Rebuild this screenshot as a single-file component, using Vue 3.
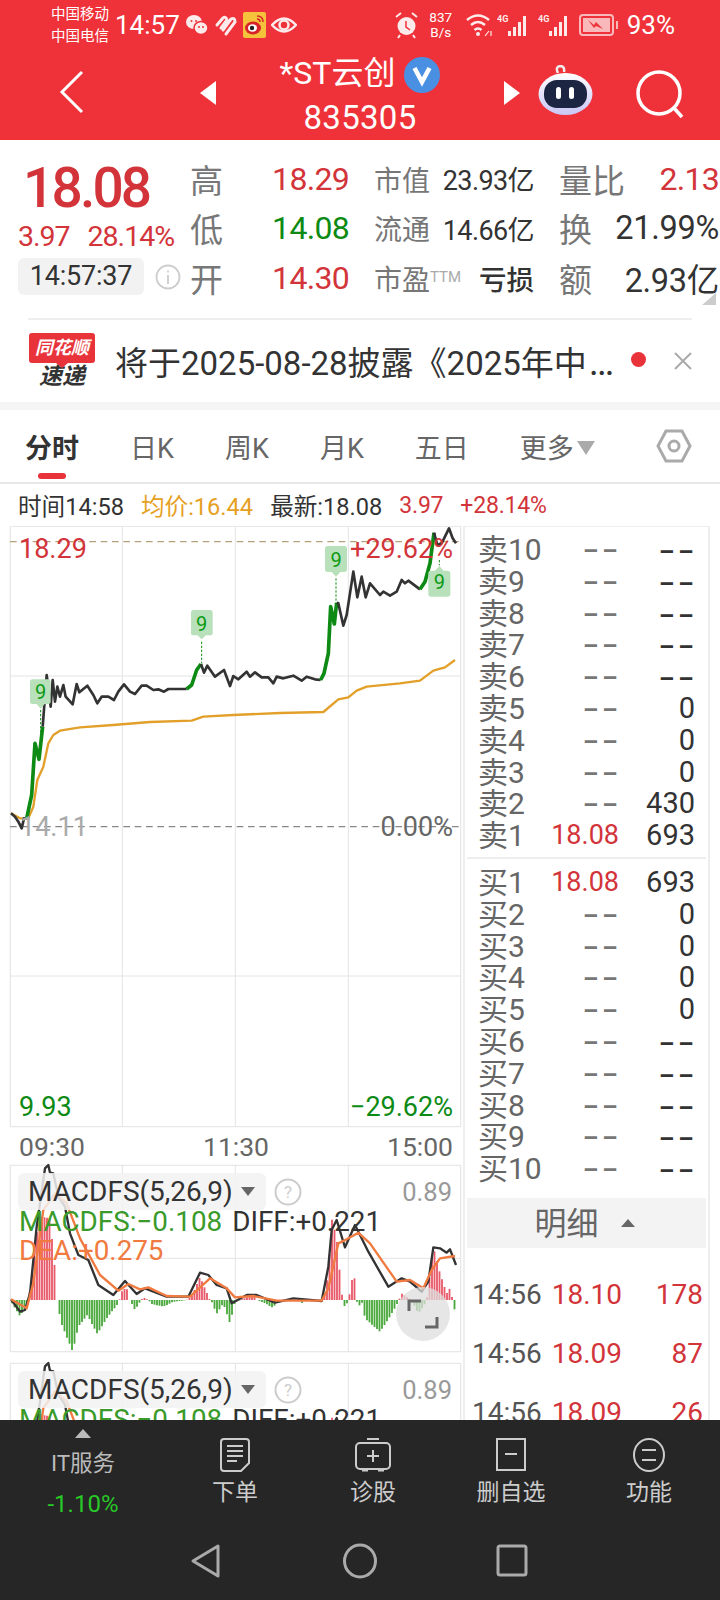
<template>
  <div class="page">
    <!-- 红色顶部 -->
    <header class="top">
      <div class="status">
        <div class="carrier"><span>中国移动</span><span>中国电信</span></div>
        <span class="clock">14:57</span>
        <svg class="st-ic" width="24" height="24" viewBox="0 0 24 24" fill="#fff" opacity=".9">
          <ellipse cx="9" cy="9" rx="8" ry="7" />
          <ellipse cx="16" cy="15" rx="7" ry="6.5" stroke="#ef3239" stroke-width="1.5" />
          <circle cx="6.5" cy="8" r="1" fill="#ef3239" /><circle cx="11" cy="8" r="1" fill="#ef3239" />
          <circle cx="14" cy="14" r="1" fill="#ef3239" /><circle cx="18" cy="14" r="1" fill="#ef3239" />
        </svg>
        <svg class="st-ic" width="24" height="24" viewBox="0 0 24 24" fill="none" stroke="#fff" stroke-width="3" stroke-linecap="round" opacity=".9">
          <path d="M3 12 L9 5 Q12 3 13 7 L7 15 M9 17 L17 6 Q21 4 21 9 L12 21" />
        </svg>
        <svg class="st-ic" width="23" height="26" viewBox="0 0 23 26">
          <rect width="23" height="26" rx="2" fill="#f5c33b" />
          <ellipse cx="10" cy="16" rx="8" ry="6.5" fill="#d8232a" />
          <ellipse cx="9.5" cy="16" rx="4.5" ry="3.8" fill="#fff" />
          <circle cx="9" cy="16" r="2.2" fill="#222" />
          <path d="M14 4 Q20 4 20 10 M14 7 Q17 7 17 10" fill="none" stroke="#d8232a" stroke-width="1.5" />
        </svg>
        <svg class="st-ic" width="26" height="24" viewBox="0 0 26 24" fill="none" stroke="#fff" opacity=".9">
          <path d="M1 12 Q13 -1 25 12 Q13 25 1 12 Z" stroke-width="2.5" />
          <circle cx="13" cy="12" r="4.5" stroke-width="2.5" />
        </svg>
        <div class="st-right">
          <svg width="23" height="28" viewBox="0 0 23 28" fill="#fff" opacity=".9">
            <circle cx="11.5" cy="15" r="9" />
            <path d="M11 10 V16 L15 19" stroke="#ef3239" stroke-width="1.5" fill="none" />
            <path d="M1 6 L6 2 M22 6 L17 2 M5 24 L3 27 M18 24 L20 27" stroke="#fff" stroke-width="2" />
          </svg>
          <div class="speed"><span>837</span><span>B/s</span></div>
          <svg class="wifi" width="28" height="26" viewBox="0 0 28 26" fill="none" stroke="#fff" stroke-width="2.5" opacity=".9">
            <path d="M1 8 Q12 -1 23 8 M5 13 Q12 7 19 13 M8.5 18 Q12 15 15.5 18" />
            <circle cx="12" cy="22" r="2" fill="#fff" stroke="none" />
            <path d="M19 24 L23 19 M25 19 V24" stroke-width="1.2" />
          </svg>
          <svg v-for="n in 2" :key="n" width="34" height="24" viewBox="0 0 34 24" fill="#fff" opacity=".9">
            <text x="0" y="9" font-size="9" font-weight="700" font-family="Roboto, sans-serif">4G</text>
            <rect x="11" y="18" width="3" height="5" /><rect x="16" y="14" width="3" height="9" />
            <rect x="21" y="9" width="3" height="14" /><rect x="26" y="3" width="3" height="20" />
          </svg>
          <svg width="41" height="24" viewBox="0 0 41 24">
            <rect x="1" y="2" width="33" height="20" rx="3" fill="none" stroke="#f9b9ba" stroke-width="2" />
            <rect x="4" y="5" width="27" height="14" fill="#f9b9ba" />
            <path d="M9 7 L15 12 L17 9 L24 16 L17 13 L15 15 Z" fill="#ef3239" />
            <rect x="37" y="8" width="2" height="8" fill="#f9b9ba" />
          </svg>
          <span class="batt">93%</span>
        </div>
      </div>
      <nav class="nav">
        <svg class="back" width="28" height="44" viewBox="0 0 28 44" fill="none" stroke="#fff" stroke-width="3">
          <path d="M24 2 L4 22 L24 42" />
        </svg>
        <i class="tri-l"></i>
        <div class="title">
          <div class="name">
            <span>*ST云创</span>
            <svg width="36" height="36" viewBox="0 0 36 36">
              <circle cx="18" cy="18" r="18" fill="#4a90e2" />
              <path d="M10.5 11 L18 25 L25.5 11" fill="none" stroke="#fff" stroke-width="4.5" />
            </svg>
          </div>
          <div class="code">835305</div>
        </div>
        <i class="tri-r"></i>
        <svg class="robot" width="55" height="50" viewBox="0 0 55 50">
          <defs>
            <linearGradient id="head" x1="0" y1="0" x2="0" y2="1">
              <stop offset="0" stop-color="#fff" /><stop offset="1" stop-color="#c9c6f5" />
            </linearGradient>
          </defs>
          <path d="M20 8 Q17 2 22 1 Q27 1 26 7" fill="none" stroke="#eee" stroke-width="2.5" />
          <ellipse cx="27.5" cy="29" rx="27" ry="21" fill="url(#head)" />
          <rect x="6" y="15" width="43" height="28" rx="13" fill="#1c2542" />
          <rect x="18" y="22" width="5" height="12" rx="2.5" fill="#fff" />
          <rect x="31" y="22" width="5" height="12" rx="2.5" fill="#fff" />
        </svg>
        <svg class="search" width="50" height="50" viewBox="0 0 50 50" fill="none" stroke="#fff" stroke-width="3.5">
          <circle cx="24" cy="23" r="21" /><path d="M39 38 L47 47" />
        </svg>
      </nav>
    </header>

    <!-- 报价 -->
    <section class="quote">
      <div class="q-left">
        <div class="price">18.08</div>
        <div class="change"><span>3.97</span><span>28.14%</span></div>
        <div class="q-time">
          <span class="pill">14:57:37</span>
          <svg width="26" height="26" viewBox="0 0 26 26" fill="none" stroke="#ccc" stroke-width="1.8">
            <circle cx="13" cy="13" r="11.5" /><path d="M13 11 V20 M13 6.5 V8.5" />
          </svg>
        </div>
      </div>
      <div class="stats">
        <div v-for="c in stats" :key="c.label" class="stat">
          <span class="s-label" :class="c.cls">{{ c.label }}<sup v-if="c.ttm">TTM</sup></span>
          <span class="s-val" :class="[c.tone, { loss: c.ttm }]">{{ c.value }}</span>
        </div>
      </div>
      <i class="corner"></i>
    </section>

    <section class="news">
      <div class="logo">
        <span class="flag">同花顺</span>
        <span class="fast">速递</span>
      </div>
      <span class="news-text">将于2025-08-28披露《2025年中<span class="ell">…</span></span>
      <i class="dot"></i>
      <svg width="18" height="18" viewBox="0 0 18 18" stroke="#aaa" stroke-width="2">
        <path d="M1 1 L17 17 M17 1 L1 17" />
      </svg>
    </section>

    <!-- 周期 -->
    <div class="tabs">
      <span v-for="(t, i) in tabs" :key="t" class="tab" :class="{ on: i === 0 }">{{ t }}</span>
      <span class="tab more">更多<i></i></span>
      <svg class="hex" width="36" height="36" viewBox="0 0 36 36" fill="none" stroke="#aaa" stroke-width="3">
        <path d="M10 3 H26 L34 18 L26 33 H10 L2 18 Z" /><circle cx="18" cy="18" r="5" />
      </svg>
    </div>
    <div class="info">
      <span>时间14:58</span>
      <span class="gold">均价:16.44</span>
      <span>最新:18.08</span>
      <span class="red">3.97</span>
      <span class="red">+28.14%</span>
    </div>

    <div class="main">
      <div class="left">
        <!-- 分时 -->
        <div class="pane">
          <svg width="451" height="601" viewBox="30 18 1353 1803" fill="none" stroke-linejoin="round">
            <rect x="31" y="19" width="1351" height="1801" stroke="#e8e8e8" stroke-width="4" />
            <path d="M367 18 V1821 M706 18 V1821 M1045 18 V1821 M30 468 H1383 M30 1368 H1383" stroke="#e4e4e4" stroke-width="3" />
            <path d="M30 65 H1383" stroke="#b5a27c" stroke-width="3.5" stroke-dasharray="20 14" />
            <path d="M30 920 H1383" stroke="#888" stroke-width="3.5" stroke-dasharray="20 14" />
            <polyline :points="avgLine" stroke="#e2a02a" stroke-width="7" />
            <polyline v-for="(s, i) in priceLine" :key="i" :points="s.pts" :stroke="s.up ? '#0c8a14' : '#333'" :stroke-width="s.up ? 11 : 8" />
            <g v-for="b in badges" :key="b.x">
              <path :d="b.line" stroke="#0c8a14" stroke-width="3" stroke-dasharray="7 5" />
              <path :d="b.shape" fill="#b8e0bb" />
              <text :x="b.x" :y="b.ty" text-anchor="middle" font-size="60" fill="#0c9a14" font-family="Roboto, sans-serif">9</text>
            </g>
          </svg>
          <span class="lb red" style="left: 9px; top: 8px">18.29</span>
          <span class="lb red rt" style="top: 8px">+29.62%</span>
          <span class="lb muted" style="left: 10px; top: 286px">14.11</span>
          <span class="lb grey rt" style="top: 286px">0.00%</span>
          <span class="lb green" style="left: 9px; top: 566px">9.93</span>
          <span class="lb green rt" style="top: 566px">−29.62%</span>
        </div>
        <div class="axis"><span>09:30</span><span>11:30</span><span>15:00</span></div>

        <!-- 副图 -->
        <div v-for="n in 2" :key="n" class="sub" :class="{ second: n === 2 }">
          <svg width="451" height="187" viewBox="30 15 1353 561" fill="none" stroke-linejoin="round">
            <rect x="31" y="16" width="1351" height="559" stroke="#e8e8e8" stroke-width="4" />
            <path d="M367 15 V576 M706 15 V576 M1045 15 V576 M30 295 H1383" stroke="#e4e4e4" stroke-width="3" />
            <path v-for="b in bars" :key="b.x" :d="`M${b.x} 420 V${b.y}`" :stroke="b.y < 420 ? '#e8596a' : '#4aa83c'" stroke-width="5.5" />
            <polyline :points="diffLine" stroke="#333" stroke-width="7" />
            <polyline :points="deaLine" stroke="#f07a40" stroke-width="7" />
          </svg>
          <div class="sub-head">
            <span class="select">MACDFS(5,26,9)<i></i></span>
            <svg width="28" height="28" viewBox="0 0 28 28" fill="none" stroke="#ccc" stroke-width="2">
              <circle cx="14" cy="14" r="12.5" />
              <text x="14" y="20" text-anchor="middle" font-size="17" fill="#ccc" stroke="none" font-family="Roboto, sans-serif">?</text>
            </svg>
            <span class="range">0.89</span>
          </div>
          <div class="legend"><span class="l-green">MACDFS:−0.108</span><span>DIFF:+0.221</span></div>
          <div class="legend dea">DEA:+0.275</div>
          <div v-if="n === 1" class="expand">
            <svg width="30" height="30" viewBox="0 0 30 30" fill="none" stroke="#666" stroke-width="3">
              <path d="M1 12 V2 H13 M29 18 V28 H17" />
            </svg>
          </div>
        </div>
      </div>

      <!-- 盘口 -->
      <aside class="book">
        <div class="asks">
          <div v-for="r in asks" :key="r.label" class="lvl">
            <span class="l-name">{{ r.label }}</span>
            <span class="l-price"><b v-if="r.price" class="red">{{ r.price }}</b><em v-else>--</em></span>
            <span class="l-vol"><template v-if="r.vol">{{ r.vol }}</template><em v-else>--</em></span>
          </div>
        </div>
        <div class="bids">
          <div v-for="r in bids" :key="r.label" class="lvl">
            <span class="l-name">{{ r.label }}</span>
            <span class="l-price"><b v-if="r.price" class="red">{{ r.price }}</b><em v-else>--</em></span>
            <span class="l-vol"><template v-if="r.vol">{{ r.vol }}</template><em v-else>--</em></span>
          </div>
        </div>
        <div class="detail-head">明细<i></i></div>
        <div v-for="(d, i) in details" :key="i" class="tick">
          <span>14:56</span><span class="red">{{ d[0] }}</span><span class="red">{{ d[1] }}</span>
        </div>
      </aside>
    </div>

    <!-- 底栏 -->
    <footer class="bottom">
      <div class="actions">
        <div class="act sector">
          <i class="up"></i>
          <span class="sec-name">IT服务</span>
          <span class="sec-pct">-1.10%</span>
        </div>
        <div class="act">
          <svg width="32" height="36" viewBox="0 0 32 36" fill="none" stroke="#ccc" stroke-width="2">
            <path d="M5 2 H27 Q30 2 30 5 V26 L22 34 H5 Q2 34 2 31 V5 Q2 2 5 2 Z M8 9 H24 M8 14 H24 M8 19 H24 M8 24 H18" />
          </svg>
          <span>下单</span>
        </div>
        <div class="act">
          <svg width="38" height="36" viewBox="0 0 38 36" fill="none" stroke="#ccc" stroke-width="2">
            <rect x="2" y="6" width="34" height="26" rx="4" /><path d="M13 2 H25 M19 13 V25 M13 19 H25" />
            <path d="M8 33 H14 M24 33 H30" stroke-width="3" />
          </svg>
          <span>诊股</span>
        </div>
        <div class="act">
          <svg width="32" height="36" viewBox="0 0 32 36" fill="none" stroke="#ccc" stroke-width="2">
            <rect x="2" y="2" width="28" height="31" /><path d="M10 17 H22" />
          </svg>
          <span>删自选</span>
        </div>
        <div class="act">
          <svg width="34" height="36" viewBox="0 0 34 36" fill="none" stroke="#ccc" stroke-width="2">
            <ellipse cx="17" cy="18" rx="15" ry="16" /><path d="M10 13 H24 M10 23 H24" />
          </svg>
          <span>功能</span>
        </div>
      </div>
      <div class="sys">
        <svg width="34" height="36" viewBox="0 0 34 36" fill="none" stroke="#aaa" stroke-width="3" stroke-linejoin="round">
          <path d="M29 3 V33 L4 18 Z" />
        </svg>
        <svg class="home" width="34" height="36" viewBox="0 0 34 36" fill="none" stroke="#aaa" stroke-width="3">
          <ellipse cx="17" cy="18" rx="15.5" ry="16" />
        </svg>
        <svg width="34" height="36" viewBox="0 0 34 36" fill="none" stroke="#aaa" stroke-width="3" stroke-linejoin="round">
          <rect x="3" y="3" width="28" height="29" rx="2" />
        </svg>
      </div>
    </footer>
  </div>
</template>

<script setup>
const stats = [
  { label: '高', value: '18.29', tone: 'red', cls: 'big' },
  { label: '市值', value: '23.93亿' },
  { label: '量比', value: '2.13', tone: 'red', cls: 'big' },
  { label: '低', value: '14.08', tone: 'green', cls: 'big' },
  { label: '流通', value: '14.66亿' },
  { label: '换', value: '21.99%', tone: 'wide', cls: 'big' },
  { label: '开', value: '14.30', tone: 'red', cls: 'big' },
  { label: '市盈', value: '亏损', ttm: true },
  { label: '额', value: '2.93亿', tone: 'wide', cls: 'big' },
]
const tabs = ['分时', '日K', '周K', '月K', '五日']

const asks = [
  ['卖10'], ['卖9'], ['卖8'], ['卖7'], ['卖6'], ['卖5', '', '0'], ['卖4', '', '0'], ['卖3', '', '0'], ['卖2', '', '430'], ['卖1', '18.08', '693'],
].map(([label, price, vol]) => ({ label, price, vol }))
const bids = [
  ['买1', '18.08', '693'], ['买2', '', '0'], ['买3', '', '0'], ['买4', '', '0'], ['买5', '', '0'], ['买6'], ['买7'], ['买8'], ['买9'], ['买10'],
].map(([label, price, vol]) => ({ label, price, vol }))
const details = [['18.10', '178'], ['18.09', '87'], ['18.09', '26']]

// 坐标取自 3 倍放大的截图
const priceLine = [
  { pts: '33,880 45,890 55,905 65,925 72,895 80,895' },
  { up: true, pts: '80,895 95,825 105,670 117,718 128,620' },
  { pts: '128,620 140,465 152,560 158,480 165,545 172,500 180,530 190,495 197,530 218,553 230,492 238,517 262,497 280,525 292,550 305,530 325,530 342,540 355,515 372,493 390,515 405,522 425,497 440,497 460,510 475,508 492,515 505,507 560,507' },
  { up: true, pts: '560,507 575,495 590,450 603,432' },
  { pts: '603,432 612,458 622,437 645,470 672,450 690,498 700,468 715,478 740,455 750,470 765,457 785,472 805,472 820,490 830,470 850,475 880,467 905,482 920,470 945,478 962,480' },
  { up: true, pts: '962,480 972,460 985,400 992,260 1003,312 1010,248' },
  { pts: '1010,248 1015,250 1030,317 1040,285 1060,155 1072,232 1085,170 1097,232 1110,190 1140,225 1150,215 1170,227 1190,215 1205,180 1215,190 1225,182 1260,208' },
  { up: true, pts: '1260,208 1275,185 1290,130 1302,38' },
  { pts: '1302,38 1312,75 1325,70 1347,25 1358,55 1368,70' },
]
const avgLine = '33,880 60,895 85,895 100,860 112,780 130,740 145,670 160,645 180,632 240,622 340,615 450,606 575,602 610,590 700,585 840,579 970,576 1015,538 1045,532 1070,512 1100,500 1200,490 1260,482 1300,452 1335,442 1365,420'
const badges = [
  { x: 122, ty: 538, line: 'M122 570 V640', shape: 'M100 478 H145 Q152 478 152 485 V545 Q152 552 145 552 H134 L122 566 L110 552 H97 Q90 552 90 545 V485 Q90 478 97 478 Z' },
  { x: 605, ty: 332, line: 'M605 365 V430', shape: 'M581 270 H630 Q638 270 638 278 V338 Q638 346 630 346 H618 L605 358 L592 346 H581 Q573 346 573 338 V278 Q573 270 581 270 Z' },
  { x: 1008, ty: 141, line: 'M1008 175 V245', shape: 'M983 78 H1033 Q1041 78 1041 86 V148 Q1041 156 1033 156 H1021 L1008 170 L995 156 H983 Q975 156 975 148 V86 Q975 78 983 78 Z' },
  { x: 1318, ty: 208, line: 'M1318 120 V136', shape: 'M1293 230 H1343 Q1351 230 1351 222 V160 Q1351 152 1343 152 H1331 L1318 138 L1305 152 H1293 Q1285 152 1285 160 V222 Q1285 230 1293 230 Z' },
]

const diffLine = '33,418 60,455 75,450 90,400 110,200 135,25 145,15 150,38 160,40 175,110 195,140 210,220 235,285 265,300 295,375 340,405 375,363 410,402 435,385 500,410 565,410 600,338 625,345 650,375 680,385 695,430 740,405 770,405 825,428 880,415 965,423 985,320 995,210 1010,180 1035,262 1065,195 1105,275 1165,380 1205,355 1230,365 1265,395 1285,365 1300,262 1320,265 1340,278 1350,268 1368,315'
const deaLine = '33,418 80,445 100,370 130,150 165,100 200,130 240,235 300,345 355,392 385,372 420,388 445,382 500,408 570,410 630,355 680,385 705,412 760,408 830,422 965,422 985,385 1015,250 1040,238 1075,218 1110,250 1190,365 1230,360 1270,385 1295,330 1320,295 1365,288'

// 柱子的外轮廓，按固定步长取样
const envelope = [[36, 430], [60, 468], [75, 445], [85, 420], [95, 350], [110, 220], [125, 170], [150, 175], [165, 330], [170, 420], [175, 420], [180, 480], [200, 530], [218, 575], [235, 500], [262, 465], [292, 522], [320, 475], [355, 430], [358, 420], [365, 395], [380, 380], [385, 420], [390, 420], [405, 450], [420, 425], [430, 412], [445, 420], [455, 432], [490, 440], [520, 425], [560, 420], [575, 410], [600, 350], [630, 420], [635, 425], [650, 462], [670, 430], [690, 490], [705, 425], [720, 420], [740, 412], [760, 402], [770, 420], [800, 432], [820, 445], [830, 422], [900, 420], [905, 430], [915, 420], [970, 420], [985, 340], [995, 175], [1010, 235], [1025, 400], [1030, 420], [1035, 445], [1045, 420], [1055, 370], [1060, 320], [1070, 420], [1075, 445], [1085, 420], [1090, 460], [1100, 480], [1140, 515], [1170, 470], [1195, 425], [1205, 400], [1235, 420], [1255, 460], [1270, 440], [1280, 420], [1300, 260], [1320, 340], [1340, 400], [1350, 385], [1358, 420], [1368, 470]]
function tip(x) {
  for (let i = 1; i < envelope.length; i++) {
    const [x0, y0] = envelope[i - 1]
    const [x1, y1] = envelope[i]
    if (x <= x1) return y0 + ((y1 - y0) * (x - x0)) / (x1 - x0)
  }
  return 420
}
const bars = []
for (let x = 36; x <= 1368; x += 7.5) bars.push({ x, y: Math.round(tip(x)) })
</script>

<style>
html, body { margin: 0; background: #fff; }
</style>

<style scoped>
.page {
  width: 720px;
  height: 1600px;
  display: flex;
  flex-direction: column;
  overflow: hidden;
  background: #fff;
  color: #333;
  font-family: Roboto, "Noto Sans CJK SC", sans-serif;
}
i, em { font-style: normal; }
.red { color: #d2343a; }
.green { color: #0c8a14; }
.gold { color: #e6a023; }

.top { height: 140px; background: #ef3239; color: #fff; flex-shrink: 0; }
.status { height: 50px; display: flex; align-items: center; padding-left: 51px; }
.carrier { width: 64px; display: flex; flex-direction: column; font-size: 14.5px; line-height: 22px; margin-top: 2px; }
.clock { font-size: 26px; width: 72px; margin-right: -2px; }
.st-ic { margin-right: 5px; }
.st-right { margin-left: auto; margin-right: 45px; display: flex; align-items: center; gap: 7px; }
.speed { display: flex; flex-direction: column; font-size: 13.5px; line-height: 15px; width: 26px; margin: 0 5px 0 3px; text-align: center; }
.wifi { margin-right: -4px; }
.batt { font-size: 26px; }

.nav { height: 90px; display: flex; align-items: center; padding-left: 58px; }
.back { margin-right: 114px; margin-top: -6px; }
.tri-l { border: 12px solid transparent; border-left-width: 0; border-right: 16px solid #fff; margin-top: -4px; }
.tri-r { border: 12px solid transparent; border-right-width: 0; border-left: 16px solid #fff; margin-top: -4px; }
.title { width: 288px; text-align: center; }
.name { display: flex; justify-content: center; align-items: center; gap: 9px; height: 46px; font-size: 32px; margin-top: -4px; }
.name svg { margin-top: 10px; }
.code { font-size: 33px; line-height: 42px; letter-spacing: 0.3px; margin-top: 4px; }
.robot { margin-left: 18px; margin-top: -10px; }
.search { margin-left: 42px; }

.quote { height: 164px; padding: 14px 0 0 18px; display: flex; position: relative; flex-shrink: 0; }
.q-left { width: 172px; flex-shrink: 0; }
.price { height: 68px; line-height: 68px; font-size: 55px; letter-spacing: -2.8px; color: #d2343a; font-weight: 500; margin-left: 5px; }
.change { height: 30px; line-height: 30px; font-size: 28.5px; letter-spacing: -1px; color: #d2343a; display: flex; gap: 18px; white-space: nowrap; }
.q-time { display: flex; align-items: center; gap: 11px; margin-top: 6px; }
.pill { background: #f2f2f2; border-radius: 6px; width: 126px; height: 37px; line-height: 37px; text-align: center; font-size: 27px; letter-spacing: -0.2px; color: #333; flex-shrink: 0; }
.stats { display: grid; grid-template-columns: 159px 160px 160px; column-gap: 25px; grid-auto-rows: 49.5px; width: 530px; }
.stat { display: flex; justify-content: space-between; align-items: center; white-space: nowrap; }
.s-label { font-size: 28px; color: #777; }
.s-label.big { font-size: 33px; }
.s-label sup { font-size: 15px; color: #aaa; vertical-align: 8px; line-height: 0; }
.s-val { font-size: 27px; color: #333; letter-spacing: -0.6px; }
.s-val.loss { font-size: 27.5px; font-weight: 500; letter-spacing: 0; }
.s-val.red, .s-val.green { font-size: 32px; letter-spacing: -0.7px; color: #d2343a; }
.s-val.green { color: #0c8a14; }
.s-val.wide { font-size: 32.5px; letter-spacing: -0.3px; }
.corner { position: absolute; right: 4px; bottom: 13px; border-style: solid; border-width: 0 0 12px 14px; border-color: transparent transparent #ccc transparent; }

.news { height: 84px; margin: 0 28px; border-top: 2px solid #eee; box-sizing: border-box; display: flex; align-items: center; flex-shrink: 0; }
.logo { width: 68px; display: flex; flex-direction: column; align-items: center; margin-right: 19px; font-style: italic; font-weight: 700; }
.flag { position: relative; width: 66px; height: 30px; line-height: 30px; background: #e8333a; color: #fff; font-size: 18px; text-align: center; border-radius: 3px; white-space: nowrap; }
.flag::after { content: ""; position: absolute; left: 27px; top: 30px; border: 6px solid transparent; border-bottom: 0; border-top: 5px solid #e8333a; }
.fast { font-size: 23px; line-height: 27px; color: #333; }
.news-text { font-size: 33px; color: #333; flex: 1; white-space: nowrap; overflow: hidden; }
.ell { font-size: 38px; line-height: 0; margin-left: 2px; }
.dot { width: 15px; height: 15px; border-radius: 50%; background: #e8333a; margin: 0 28px 4px 15px; flex-shrink: 0; }
.news svg { flex-shrink: 0; }

.tabs { margin-top: 8px; height: 74px; box-sizing: border-box; border-bottom: 2px solid #e8e8e8; display: flex; align-items: center; gap: 51px; padding: 0 28px 0 25px; position: relative; flex-shrink: 0; box-shadow: 0 -8px 0 #f5f5f5; }
.tab { font-size: 27px; color: #666; white-space: nowrap; }
.tab.on { font-weight: 700; color: #333; position: relative; }
.tab.on::after { content: ""; position: absolute; left: 13px; top: 46px; width: 28px; height: 6px; border-radius: 3px; background: #e8333a; }
.more i { display: inline-block; border: 9px solid transparent; border-bottom: 0; border-top: 14px solid #aaa; margin-left: 3px; vertical-align: 3px; }
.hex { margin-left: auto; }

.info { height: 42px; display: flex; align-items: center; gap: 17px; font-size: 23.6px; padding-left: 18px; white-space: nowrap; flex-shrink: 0; }
.info .red { font-size: 23px; letter-spacing: -0.2px; }

.main { flex: 1; min-height: 0; display: flex; overflow: hidden; padding-left: 10px; }
.left { width: 453px; flex-shrink: 0; }
.pane { position: relative; width: 451px; height: 601px; }
.pane svg, .sub svg:first-child { display: block; overflow: visible; }
.lb { position: absolute; font-size: 27px; line-height: 30px; }
.lb.rt { right: 8px; }
.muted { color: #aaa; }
.grey { color: #666; }
.axis { height: 38px; display: flex; justify-content: space-between; align-items: center; font-size: 26.5px; color: #666; padding: 0 8px 0 9px; box-sizing: border-box; width: 451px; }
.sub { position: relative; width: 451px; height: 187px; }
.sub.second { margin-top: 11px; }
.sub-head { position: absolute; left: 8px; top: 8px; right: 9px; display: flex; align-items: center; }
.select { width: 248px; height: 37px; line-height: 37px; box-sizing: border-box; padding-left: 10px; background: rgba(242, 242, 242, 0.85); border-radius: 6px; font-size: 28px; color: #333; white-space: nowrap; display: flex; align-items: center; }
.select i { border: 7px solid transparent; border-bottom: 0; border-top: 9px solid #666; margin-left: 8px; }
.sub-head svg { margin-left: 8px; }
.range { margin-left: auto; font-size: 25.5px; color: #999; }
.legend { position: absolute; left: 9px; top: 42px; font-size: 27.8px; line-height: 30px; color: #333; white-space: nowrap; display: flex; gap: 10px; }
.l-green { color: #3a9a2a; }
.dea { top: 71px; color: #f07a40; }
.expand { position: absolute; left: 386px; top: 122px; width: 54px; height: 54px; border-radius: 50%; background: rgba(222, 222, 222, 0.75); display: flex; align-items: center; justify-content: center; }

.book { width: 247px; box-sizing: border-box; border: solid #eee; border-width: 2px 2px 0; margin-top: -1px; flex-shrink: 0; height: 900px; }
.asks { padding-top: 7px; height: 332px; box-sizing: border-box; border-bottom: 2px solid #eee; margin: 0 2px; }
.bids { padding-top: 8px; height: 339px; box-sizing: border-box; }
.lvl { height: 31.8px; display: grid; grid-template-columns: 72px 69px 76px; padding-left: 13px; line-height: 31.8px; white-space: nowrap; }
.asks .lvl { padding-left: 11px; }
.l-name { font-size: 30px; color: #666; }
.l-price { text-align: right; font-size: 27px; }
.l-vol { text-align: right; font-size: 29px; color: #333; }
.l-price b { font-weight: 400; }
.l-price em { color: #777; }
.lvl em { display: inline-block; font-weight: 700; font-size: 24px; letter-spacing: 1px; transform: scaleX(1.85); transform-origin: right center; margin-right: -2px; }
.detail-head { margin: 0 2px; height: 50px; line-height: 52px; background: #f3f3f3; font-size: 32px; color: #666; text-align: center; padding-right: 4px; }
.detail-head i { display: inline-block; border: 7px solid transparent; border-top: 0; border-bottom: 8px solid #666; margin-left: 22px; vertical-align: 8px; }
.tick { height: 59px; display: grid; grid-template-columns: 70px 80px 81px; padding-left: 7px; line-height: 59px; font-size: 28px; color: #555; white-space: nowrap; }
.detail-head + .tick { margin-top: 17px; }
.tick span + span { text-align: right; }

.bottom { height: 180px; background: #262626; flex-shrink: 0; position: relative; }
.actions { height: 123px; display: grid; grid-template-columns: 166px repeat(4, 138px); }
.act { display: flex; flex-direction: column; align-items: center; padding-top: 17px; color: #ccc; font-size: 23px; }
.act svg { height: 36px; }
.act span { margin-top: 3px; line-height: 34px; }
.sector { padding-top: 9px; }
.up { border: 8px solid transparent; border-top: 0; border-bottom: 9px solid #bbb; }
.act .sec-name { margin-top: 8px; font-size: 22.5px; color: #bbb; }
.act .sec-pct { margin-top: 7px; font-size: 24px; color: #28c828; }
.sys { display: flex; padding-left: 189px; gap: 118px; }
.home { margin-left: 2px; }
</style>
